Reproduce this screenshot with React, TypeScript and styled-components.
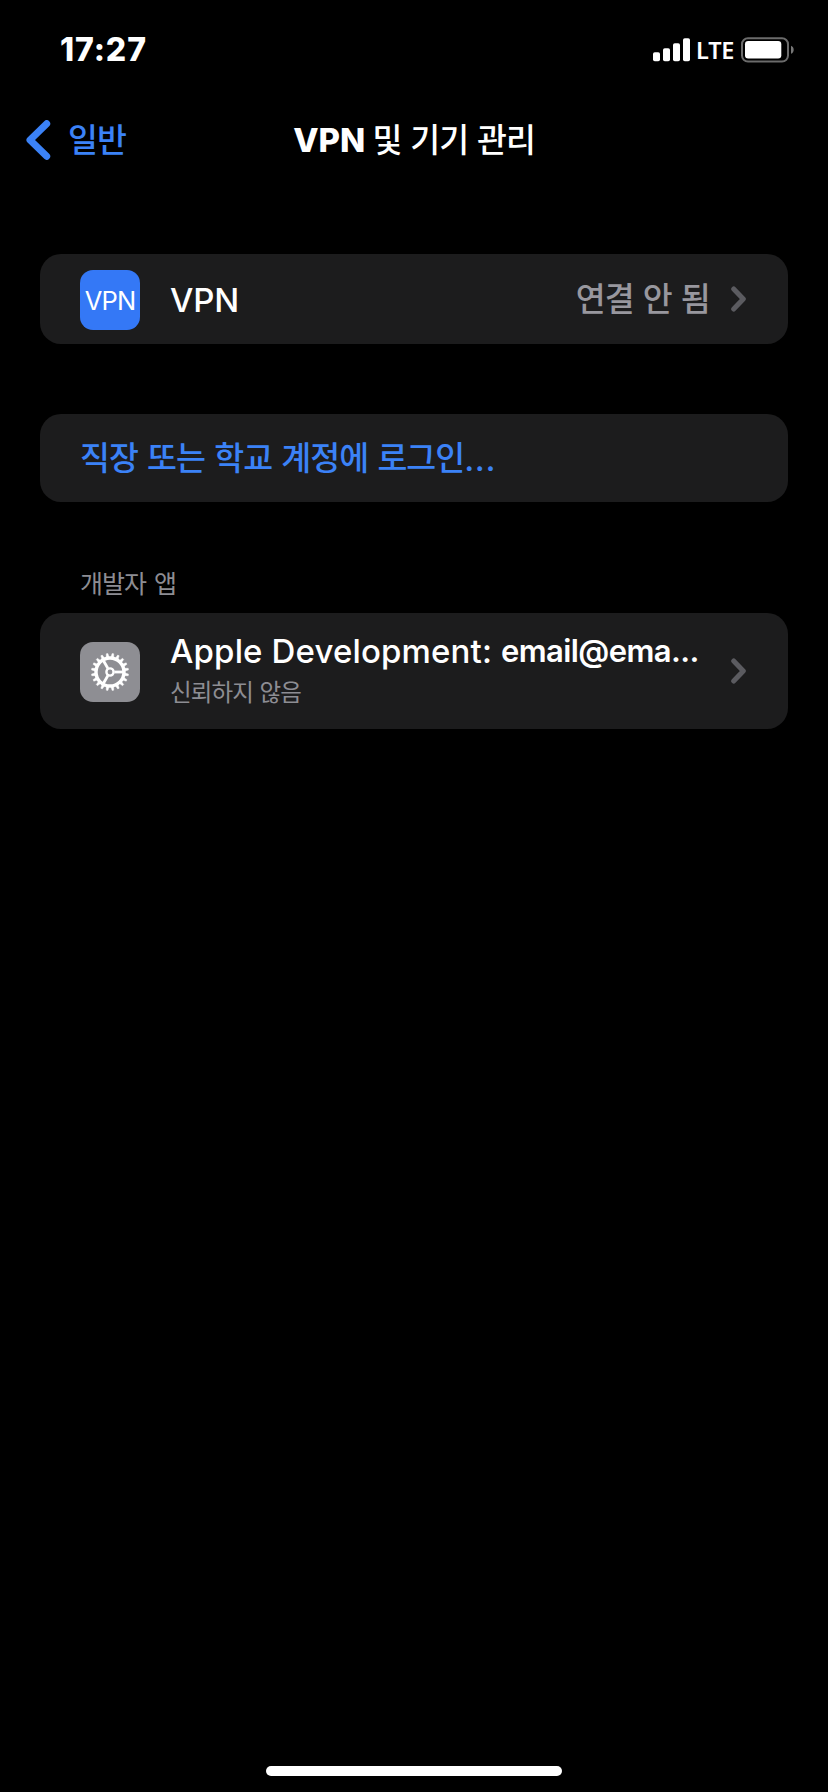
import React from "react";
import styled, { createGlobalStyle } from "styled-components";

const Global = createGlobalStyle`
  * { box-sizing: border-box; }
  body { margin: 0; background: #000; }
`;

const Screen = styled.div`
  width: 828px;
  height: 1792px;
  display: flex;
  flex-direction: column;
  background: #000;
  color: #fff;
  overflow: hidden;
  font-family: Inter, "Noto Sans CJK KR", sans-serif;
`;

const StatusBar = styled.header`
  display: flex;
  align-items: center;
  height: 100px;
  padding: 0 34px 0 60px;
`;

const Time = styled.span`
  font-size: 32px;
  font-weight: 800;
  line-height: 40px;
  letter-spacing: 0.9px;
  margin-right: auto;
`;

const Network = styled.span`
  width: 44px;
  padding-left: 6px;
  font: 600 23.5px/28px "Noto Sans", sans-serif;
  letter-spacing: -0.2px;
  margin-bottom: 1px;
  margin-right: 7px;
`;

const NavBar = styled.nav`
  display: grid;
  grid-template-columns: 1fr auto 1fr;
  align-items: center;
  height: 80px;
  padding: 0 26px;
`;

const Back = styled.a`
  display: flex;
  align-items: center;
  gap: 17px;
  color: #3b82f7;
`;

const BackLabel = styled.span`
  display: flex;
  padding-top: 2px;
`;

const Title = styled.h1`
  margin: 0;
  font-size: 33px;
  line-height: 40px;
  font-weight: 500;
  white-space: nowrap;
`;

const Run = styled.span<{ $weight?: number; $size?: number; $spacing?: number; $word?: number }>`
  font-weight: ${(p) => p.$weight ?? 500};
  font-size: ${(p) => p.$size ?? 33}px;
  letter-spacing: ${(p) => p.$spacing ?? 0}px;
  word-spacing: ${(p) => p.$word ?? 0}px;
  line-height: 40px;
  white-space: pre;
`;

const List = styled.main`
  display: flex;
  flex-direction: column;
  padding: 74px 40px 0;
`;

const Card = styled.section<{ $height: number; $top?: number }>`
  display: flex;
  align-items: center;
  height: ${(p) => p.$height}px;
  margin-top: ${(p) => p.$top ?? 0}px;
  padding: 0 42px 0 40px;
  border-radius: 21px;
  background: #1c1c1d;
`;

const Tile = styled.div<{ $color: string }>`
  display: flex;
  align-items: center;
  justify-content: center;
  flex: none;
  width: 60px;
  height: 60px;
  margin-top: 2px;
  margin-right: 30px;
  border-radius: 13px;
  background: ${(p) => p.$color};
  font-size: 25.5px;
  font-weight: 400;
  letter-spacing: -0.9px;
`;

const Label = styled.div`
  display: flex;
  padding-top: 1px;
`;

const Value = styled.span`
  margin-left: auto;
  margin-right: 21px;
  padding-top: 2px;
  color: #98979e;
  display: flex;
`;

const Link = styled.a`
  color: #3b82f7;
  display: flex;
  padding-top: 2px;
`;

const SectionLabel = styled.h2`
  height: 34px;
  margin: 65px 40px 12px;
  color: #8d8d93;
  font-size: 25px;
  font-weight: 400;
  line-height: 34px;
  letter-spacing: -1px;
  word-spacing: 2px;
`;

const Texts = styled.div`
  display: flex;
  flex-direction: column;
  flex: 1;
`;

const Line = styled.div`
  display: flex;
  height: 40px;
  align-items: center;
`;

const Subtitle = styled.div`
  margin-top: 5px;
  margin-bottom: 1px;
  color: #8d8d93;
  font-size: 23.5px;
  line-height: 34px;
  letter-spacing: -0.9px;
  word-spacing: 1px;
`;

const HomeArea = styled.footer`
  margin-top: auto;
  display: flex;
  justify-content: center;
  padding-bottom: 16px;
`;

const HomeIndicator = styled.div`
  width: 296px;
  height: 10px;
  border-radius: 5px;
  background: #fff;
`;

const Chevron = () => (
  <svg width="15" height="26" viewBox="0 0 15 26" fill="none">
    <path d="M2.7 3 12.3 13 2.7 23" stroke="#5b5b60" strokeWidth="5" strokeLinecap="round" strokeLinejoin="round" />
  </svg>
);

const BackChevron = () => (
  <svg width="25" height="40" viewBox="0 0 25 40" fill="none">
    <path d="M20.7 3.7 4 20l16.7 16.3" stroke="currentColor" strokeWidth="7" strokeLinecap="round" strokeLinejoin="round" />
  </svg>
);

const Signal = () => (
  <svg width="37" height="24" viewBox="0 0 37 24" fill="#fff">
    <rect x="0" y="14.3" width="7" height="9" rx="1.8" />
    <rect x="10" y="10.3" width="7" height="13" rx="1.8" />
    <rect x="20" y="5.3" width="7" height="18" rx="1.8" />
    <rect x="30" y="0.3" width="7" height="23" rx="1.8" />
  </svg>
);

const Battery = () => (
  <svg width="53" height="26" viewBox="0 0 53 26">
    <rect x="1" y="1.2" width="46" height="23.4" rx="6" fill="none" stroke="#6b6b6b" strokeWidth="2" />
    <rect x="4" y="4" width="36.3" height="17.5" rx="3.2" fill="#fff" />
    <path d="M50 8.8c3.6 1.2 3.6 6.6 0 8z" fill="#777" />
  </svg>
);

const TEETH = Array.from({ length: 20 }, (_, i) => i * 18);

const Gear = () => (
  <svg width="40" height="40" viewBox="-20 -20 40 40" fill="none" stroke="#fff">
    <circle r="14" strokeWidth="3.4" />
    {TEETH.map((a) => (
      <path key={a} d="M-1.4-15 L-0.8-18.6 H0.8 L1.4-15Z" fill="#fff" strokeWidth="0.4" transform={`rotate(${a + 9})`} />
    ))}
    <circle r="3.6" strokeWidth="2.4" />
    {[90, 210, 330].map((a) => (
      <path key={a} d="M0-4.4V-13" strokeWidth="2.8" transform={`rotate(${a})`} />
    ))}
  </svg>
);

export default function App() {
  return (
    <Screen>
      <Global />
      <StatusBar>
        <Time>17:27</Time>
        <Signal />
        <Network>LTE</Network>
        <Battery />
      </StatusBar>
      <NavBar>
        <Back>
          <BackChevron />
          <BackLabel>
            <Run $size={32.5} $spacing={-1}>일반</Run>
          </BackLabel>
        </Back>
        <Title>
          <Run $weight={800}>VPN </Run>
          <Run $size={32.5} $spacing={-1} $word={1.2}>및 기기 관리</Run>
        </Title>
      </NavBar>
      <List>
        <Card $height={90}>
          <Tile $color="#3478f6">VPN</Tile>
          <Label>
            <Run $size={33} $spacing={-0.2}>VPN</Run>
          </Label>
          <Value>
            <Run $size={32.5} $spacing={-0.7} $word={0.8}>연결 안 됨</Run>
          </Value>
          <Chevron />
        </Card>
        <Card $height={88} $top={70}>
          <Link>
            <Run $size={32.5} $spacing={-0.95} $word={1.5}>직장 또는 학교 계정에 로그인</Run>
            <Run $size={33} $spacing={0.6}>...</Run>
          </Link>
        </Card>
        <SectionLabel>개발자 앱</SectionLabel>
        <Card $height={116}>
          <Tile $color="#8e8e93">
            <Gear />
          </Tile>
          <Texts>
            <Line>
              <Run $spacing={0.15}>Apple Development: </Run>
              <Run $weight={600} $size={31} $spacing={-0.6}>email@ema...</Run>
            </Line>
            <Subtitle>신뢰하지 않음</Subtitle>
          </Texts>
          <Chevron />
        </Card>
      </List>
      <HomeArea>
        <HomeIndicator />
      </HomeArea>
    </Screen>
  );
}
